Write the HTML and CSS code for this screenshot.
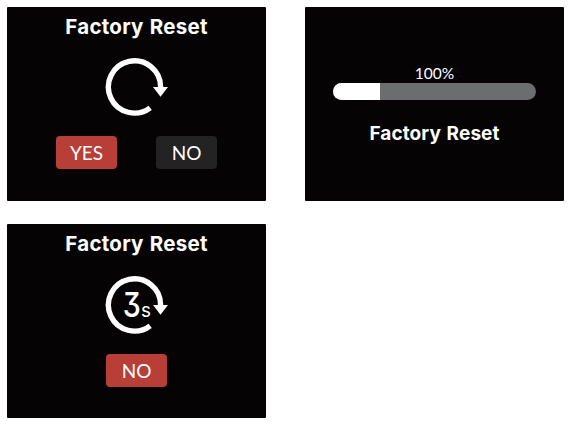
FILE: index.html
```html
<!DOCTYPE html>
<html>
<head>
    <meta charset="UTF-8">
    <title>Factory Reset</title>
    <link rel="stylesheet" href="styles.css">
</head>
<body>

    <div class="screens">
        <div class="screen">
            <h2>Factory Reset</h2>
            <div class="reset-icon">
                <svg width="64" height="60" viewBox="0 0 64 60">
                    <path d="M56.6 30.5 V30 A26.1 26.1 0 1 0 46.2 50.8" fill="none" stroke="#fff" stroke-width="5.4"/>
                    <path d="M49 30 H64 L56.5 39.7 Z" fill="#fff"/>
                </svg>
            </div>
            <div class="buttons">
                <button class="red-button">YES</button>
                <button class="dark-button">NO</button>
            </div>
        </div>

        <div class="screen progress-screen">
            <div class="percent">100%</div>
            <div class="bar"><div class="fill"></div></div>
            <h3>Factory Reset</h3>
        </div>

        <div class="screen countdown-screen">
            <h2>Factory Reset</h2>
            <div class="reset-icon">
                <svg width="64" height="60" viewBox="0 0 64 60">
                    <path d="M56.6 30.5 V30 A26.1 26.1 0 1 0 46.2 50.8" fill="none" stroke="#fff" stroke-width="5.4"/>
                    <path d="M49 30 H64 L56.5 39.7 Z" fill="#fff"/>
                    <text class="count" x="18.8" y="42" textLength="18" lengthAdjust="spacingAndGlyphs">3</text>
                    <text class="unit" x="37" y="42" textLength="10" lengthAdjust="spacingAndGlyphs">s</text>
                </svg>
            </div>
            <div class="buttons">
                <button class="red-button">NO</button>
            </div>
        </div>
    </div>

</body>
</html>
```

FILE: styles.css
```css
body {
    margin: 0;
    background-color: #fff;
    font-family: Lato, "Liberation Sans", sans-serif;
}

.screens {
    display: grid;
    grid-template-columns: 259px 259px;
    grid-auto-rows: 194px;
    gap: 23px 39px;
    padding: 7px;
}

.screen {
    display: flex;
    flex-direction: column;
    align-items: center;
    box-sizing: border-box;
    background-color: #050304;
    border-radius: 1px;
    color: #fff;
}

h2, h3 {
    margin: 0;
    font-family: Inter, "Liberation Sans", sans-serif;
    font-weight: bold;
    white-space: nowrap;
    word-spacing: 1px;
}

h2 {
    margin-top: 7px;
    font-size: 20.5px;
    line-height: 25px;
    letter-spacing: 0.25px;
}

.reset-icon {
    height: 60px;
    margin-top: 18px;
    margin-right: 1px;
}

.reset-icon svg {
    display: block;
}

.count {
    fill: #fff;
    font-family: Inter, sans-serif;
    font-size: 34px;
    font-weight: 500;
    font-feature-settings: "cv09";
}

.unit {
    fill: #fff;
    font-family: Inter, sans-serif;
    font-size: 20px;
}

.buttons {
    display: flex;
    gap: 39px;
    margin-top: 19px;
}

button {
    width: 61px;
    height: 33px;
    padding: 0;
    border: none;
    border-radius: 4px;
    color: #fff;
    font-family: Lato, "Liberation Sans", sans-serif;
    font-size: 19px;
}

.red-button {
    background-color: #b83e38;
}

.dark-button {
    background-color: #232323;
}

.countdown-screen .reset-icon {
    margin-top: 19px;
}

.progress-screen {
    padding-top: 57px;
}

.percent {
    font-size: 15.5px;
    line-height: 19px;
}

.bar {
    width: 203px;
    height: 17px;
    border-radius: 9px;
    background-color: #6b6d6e;
    overflow: hidden;
}

.fill {
    width: 47px;
    height: 17px;
    background-color: #fff;
}

h3 {
    margin-top: 22px;
    font-size: 19px;
    line-height: 24px;
    letter-spacing: 0.1px;
}
```
